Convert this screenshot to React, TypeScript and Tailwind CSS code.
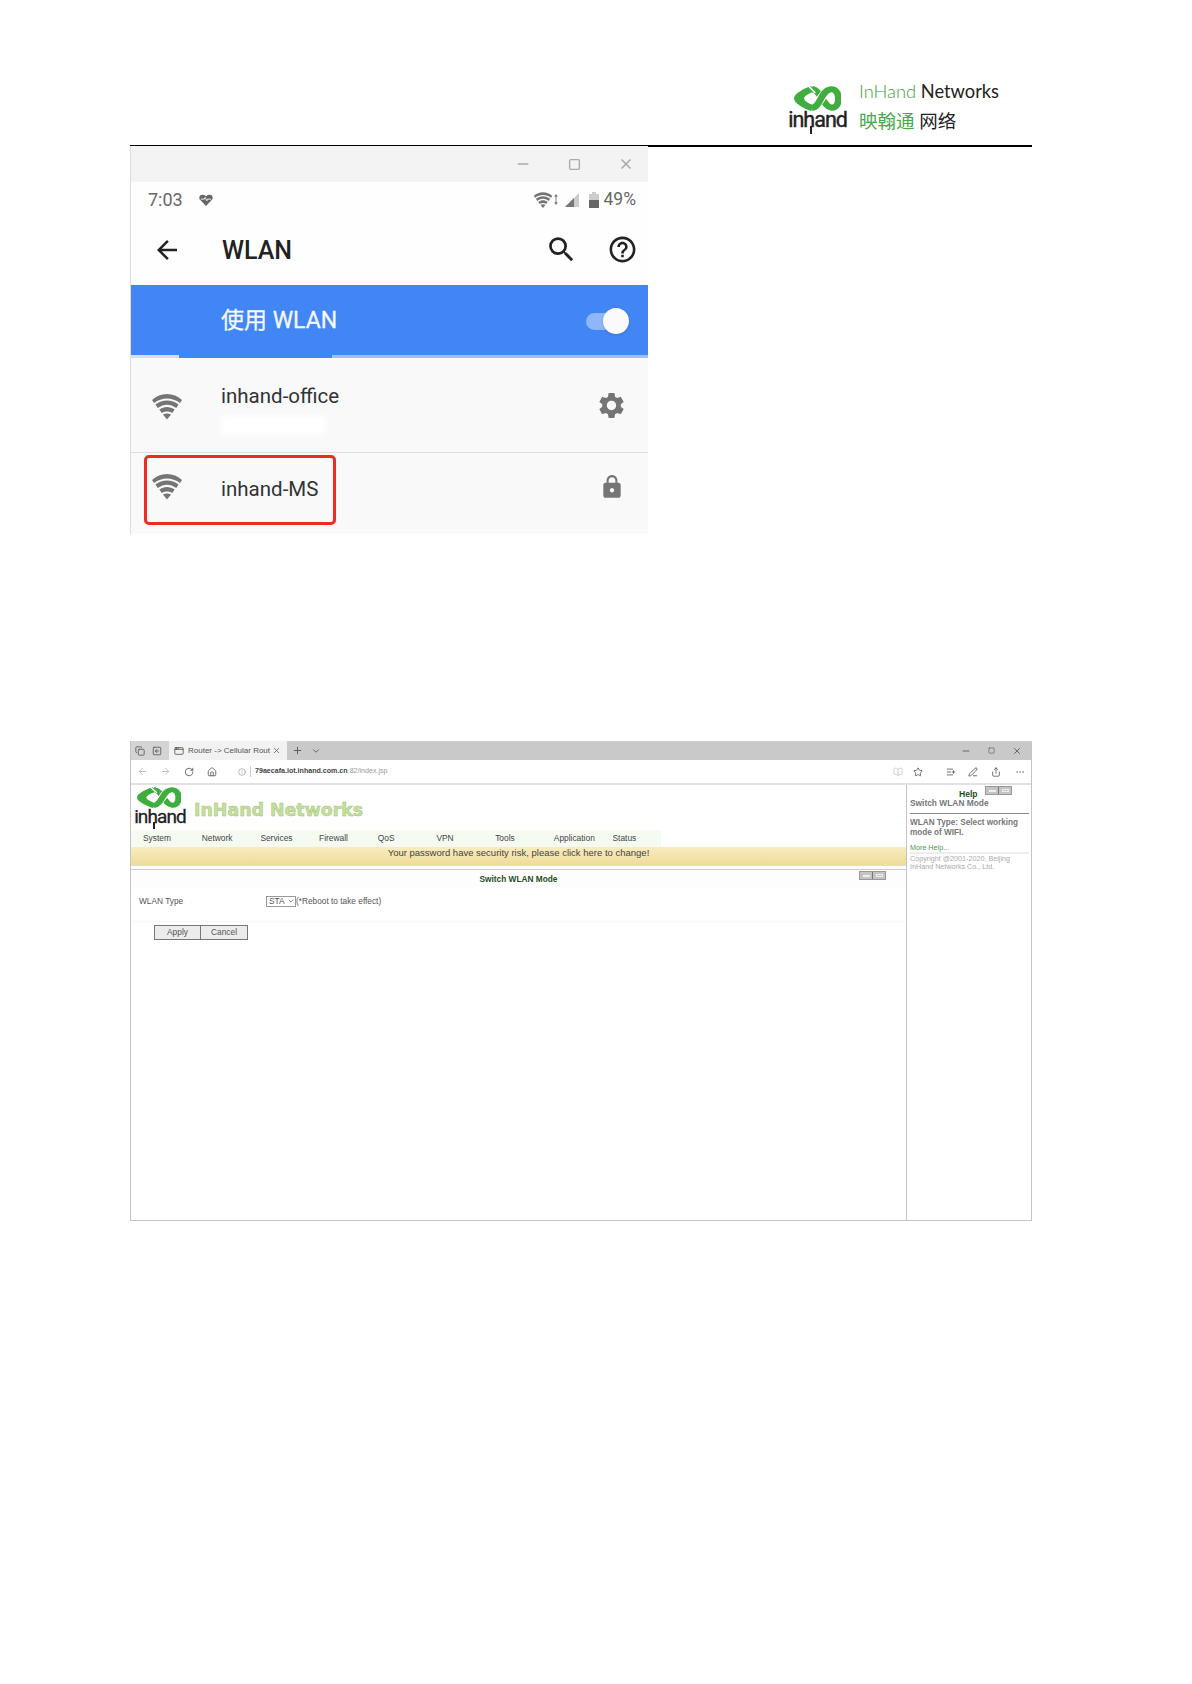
import { ArrowLeft, Minus, Square, X, Plus, ChevronDown, RotateCw, Home, Info, Star, Share, PenLine, BookOpen, ListPlus, Ellipsis, ArrowRight, Copy, SquareArrowLeft, AppWindow } from 'lucide-react';
import { MdSettings, MdLock, MdSearch, MdHelpOutline, MdArrowBack } from 'react-icons/md';

const cjk = "font-['Lato','Noto_Sans_CJK_SC',sans-serif]";
const menuItems = ['System', 'Network', 'Services', 'Firewall', 'QoS', 'VPN', 'Tools', 'Application', 'Status'];

function Knot({ className }: { className: string }) {
  return (
    <svg viewBox="0 0 42 25" preserveAspectRatio="none" className={className}>
      <path d="M15 0 C8 3 0 8 0 12.5 C0 17 8 22 15 25 L19 20 C14 18 9 15 9 12.5 C9 10 14 7 19 5 Z" fill="#3fae3f" />
      <path d="M16 3 C24 4 26 20 33 21.5 C38 22.5 40 17 39.5 12" fill="none" stroke="#3fae3f" strokeWidth="6" />
      <path d="M19 19 C24 16 25 7 32 3" fill="none" stroke="#fff" strokeWidth="8" />
      <path d="M16 22 C24 21 24 5 32 3.5 C37 2.5 40 7 39.5 13" fill="none" stroke="#3fae3f" strokeWidth="6" />
      <path d="M13 0 L19 7" fill="none" stroke="#fff" strokeWidth="1.5" />
      <path d="M20 12.5 L16 10.5 L16 14.5 Z" fill="#fff" />
    </svg>
  );
}

function WifiIcon({ className }: { className: string }) {
  return (
    <svg viewBox="0 0 30 26" className={className} fill="#757575">
      <path d="M0 6.5 C8 -1.5 22 -1.5 30 6.5 L28 9.5 C20 3.5 10 3.5 2 9.5 Z" />
      <path d="M3.5 11 C10 5.5 20 5.5 26.5 11 L24.3 14.5 C18 10 12 10 5.7 14.5 Z" />
      <path d="M7.3 16 C12 12.5 18 12.5 22.7 16 L20.3 19.5 C17 17.5 13 17.5 9.7 19.5 Z" />
      <path d="M11 21 C13.5 19.5 16.5 19.5 19 21 L15 26 Z" />
    </svg>
  );
}

function SmallBtns({ className }: { className: string }) {
  return (
    <div className={`flex h-[9px] w-[27px] border border-[#999] bg-[#c4c4c4] ${className}`}>
      <div className="flex flex-1 items-center justify-center border-r border-[#777]"><div className="h-[2px] w-[7px] bg-[#eee]" /></div>
      <div className="flex flex-1 items-center justify-center"><div className="h-[3px] w-[7px] border border-[#eee]" /></div>
    </div>
  );
}

function Wordmark({ className, barClass }: { className: string; barClass: string }) {
  return (
    <span className={`relative font-['Roboto',sans-serif] text-[#222] ${className}`}>
      inhand
      <span className={`absolute w-[2px] bg-[#222] ${barClass}`} />
    </span>
  );
}

export default function App() {
  return (
    <div className="h-[1684px] w-[1192px] overflow-hidden bg-white pl-[130px] font-['Liberation_Sans',sans-serif]">
      {/* page header */}
      <div className="flex h-[147px] w-[902px] items-end justify-end border-b-2 border-black pb-[12px] pr-[33px]">
        <div className="mr-[13px] flex w-[57px] flex-col items-center">
          <Knot className="h-[25px] w-[47px]" />
          <Wordmark className="-mt-[4px] text-[21.5px] leading-[26px] tracking-[-1px] [-webkit-text-stroke:0.4px_#222]" barClass="left-[37%] top-[19px] h-[8px]" />
        </div>
        <div className={`flex flex-col ${cjk}`}>
          <span className="whitespace-nowrap text-[18.3px] leading-[24px] text-[#231f20]"><span className="font-light text-[#3f9f3f]">InHand</span> Networks</span>
          <span className="mt-[6px] whitespace-nowrap text-[18.5px] leading-[24px] text-[#222]"><span className="text-[#4aa84a]">映翰通</span> 网络</span>
        </div>
      </div>

      {/* phone screenshot */}
      <div className="-mt-px flex h-[388px] w-[518px] flex-col border-l border-[#ddd] font-['Roboto',sans-serif]">
        <div className="flex h-[36px] flex-none items-center justify-end gap-[37px] bg-[#f3f3f3] pr-[14px] text-[#aaa]">
          <Minus size={16} strokeWidth={2.5} />
          <Square size={13} strokeWidth={2.5} />
          <X size={16} strokeWidth={2.5} />
        </div>
        <div className="flex h-[32px] flex-none items-center bg-[#fefefe] pl-[17px] pr-[12px] pt-[3px] text-[#666]">
          <span className="text-[18px]">7:03</span>
          <svg viewBox="0 0 16 14" className="ml-[16px] h-[12px] w-[14px]">
            <path d="M8 14 L0.5 6 C-1 2 3 -1 8 2.5 C13 -1 17 2 15.5 6 Z" fill="#666" />
            <path d="M2 6 H6 L7 4 L9 8 L10 6 H14" stroke="#fff" strokeWidth="1" fill="none" />
          </svg>
          <div className="ml-auto flex items-center gap-[5px]">
            <WifiIcon className="h-[16px] w-[20px]" />
            <svg viewBox="0 0 4 12" className="-ml-[4px] h-[11px] w-[4px]"><path d="M2 0 L4 3 H0 Z M2 12 L4 9 H0 Z M1.5 3 H2.5 V9 H1.5 Z" fill="#777" /></svg>
            <svg viewBox="0 0 16 16" className="ml-[1px] h-[16px] w-[16px]"><path d="M15 1 V15 H1 Z" fill="#ccc" /><path d="M10 6 V15 H1 Z" fill="#777" /></svg>
            <svg viewBox="0 0 10 16" className="ml-[4px] h-[16px] w-[10px]"><path d="M3 0 H7 V2 H10 V16 H0 V2 H3 Z" fill="#ccc" /><path d="M0 8 H10 V16 H0 Z" fill="#666" /></svg>
            <span className="text-[17.5px]">49%</span>
          </div>
        </div>
        <div className="flex h-[71px] flex-none items-center bg-[#fefefe] pl-[21px] pr-[10px] pt-[3px]">
          <MdArrowBack size={30} className="-mt-[3px] text-[#222]" />
          <span className="ml-[40px] text-[25px] font-medium text-[#222]">WLAN</span>
          <MdSearch size={33} className="-mt-[3px] ml-auto text-[#222]" />
          <MdHelpOutline size={31} className="-mt-[3px] ml-[29px] text-[#222]" />
        </div>
        <div className="flex h-[73px] flex-none flex-col bg-[#4285f4]">
          <div className="flex flex-1 items-center pl-[90px] pr-[20px] pt-[2px]">
            <span className="font-['Roboto','Noto_Sans_CJK_SC',sans-serif] text-[23px] text-[#f4f8ff] [-webkit-text-stroke:0.3px_#f4f8ff]">使用 WLAN</span>
            <div className="ml-auto flex h-[17px] w-[42px] items-center justify-end rounded-full bg-[#8fb6f8]">
              <div className="-mr-[1px] h-[26px] w-[26px] rounded-full bg-[#fafafa] shadow" />
            </div>
          </div>
          <div className="flex h-[3px] flex-none">
            <div className="w-[48px] bg-[#d0e0fb]" />
            <div className="w-[153px]" />
            <div className="flex-1 bg-[#9dbff8]" />
          </div>
        </div>
        <div className="relative flex h-[95px] flex-none items-center border-b border-[#ddd] bg-[#f9f9f9] pl-[21px] pr-[21px]">
          <div className="absolute left-[90px] top-[58px] h-[18px] w-[105px] bg-white blur-[3px]" />
          <WifiIcon className="mt-[2px] h-[27px] w-[30px]" />
          <div className="relative -mt-[18px] ml-[39px] text-[20.5px] text-[#333]">inhand-office</div>
          <MdSettings size={31} className="ml-auto text-[#757575]" />
        </div>
        <div className="flex flex-1 items-center bg-[#f9f9f9] pb-[9px] pl-[21px] pr-[21px]">
          <div className="relative -mt-[6px]">
            <WifiIcon className="h-[27px] w-[30px]" />
            <div className="absolute -left-[8px] -top-[18px] h-[70px] w-[192px] rounded-[5px] border-[3px] border-[#ee2a24]" />
          </div>
          <div className="ml-[39px] text-[20.5px] text-[#333]">inhand-MS</div>
          <MdLock size={26} className="mb-[4px] ml-auto mr-[2px] text-[#757575]" />
        </div>
      </div>

      {/* browser screenshot */}
      <div className="mt-[207px] flex h-[480px] w-[902px] flex-col border-b border-l border-r border-[#c4c4c4]">
        <div className="flex h-[19px] flex-none items-center bg-[#c9c9c9] text-[#555]">
          <div className="flex h-full w-[38px] items-center gap-[7px] bg-[#d4d4d4] pl-[4px]">
            <Copy size={10} />
            <SquareArrowLeft size={10} />
          </div>
          <div className="flex h-full w-[118px] items-center bg-[#f2f2f2] pl-[5px]">
            <AppWindow size={10} />
            <span className="ml-[4px] w-[80px] whitespace-nowrap text-[8px]">Router -&gt; Cellular Rout</span>
            <X size={9} className="ml-[4px]" />
          </div>
          <Plus size={11} className="ml-[5px]" />
          <ChevronDown size={10} className="ml-[8px]" />
          <div className="ml-auto flex items-center gap-[17px] pr-[9px]">
            <Minus size={10} />
            <Square size={7} />
            <X size={10} />
          </div>
        </div>
        <div className="flex h-[25px] flex-none items-center border-b-2 border-[#e2e2e2] bg-white text-[#555]">
          <ArrowLeft size={11} className="ml-[6px] text-[#bbb]" />
          <ArrowRight size={11} className="ml-[12px] text-[#bbb]" />
          <RotateCw size={10} className="ml-[13px]" />
          <Home size={10} className="ml-[13px]" />
          <div className="ml-[15px] flex h-[20px] w-[691px] items-center">
            <Info size={8} className="ml-[6px] text-[#999]" />
            <span className="ml-[4px] border-l border-[#ccc] pl-[4px] text-[7.1px] font-bold text-[#444]">79aecafa.iot.inhand.com.cn<span className="font-normal text-[#999]">:82/index.jsp</span></span>
            <BookOpen size={10} className="ml-auto mr-[10px] text-[#ccc]" />
            <Star size={10} />
          </div>
          <ListPlus size={10} className="ml-[23px]" />
          <PenLine size={10} className="ml-[12px]" />
          <Share size={10} className="ml-[13px]" />
          <Ellipsis size={10} className="ml-[14px] text-[#888]" />
        </div>
        <div className="flex flex-1">
          <div className="flex w-[775px] flex-none flex-col">
            <div className="flex h-[45px] flex-none items-center pl-[3px]">
              <div className="flex w-[52px] flex-col items-center">
                <Knot className="-mt-[1px] ml-[-3px] h-[21px] w-[44px]" />
                <Wordmark className="-mt-[3px] text-[19px] leading-[23px] tracking-[-0.9px] [-webkit-text-stroke:0.3px_#222]" barClass="left-[37%] top-[17px] h-[7px]" />
              </div>
              <span className="ml-[8px] mt-[6px] font-['DejaVu_Sans',sans-serif] text-[17.4px] font-bold text-[#c5dfa0] [-webkit-text-stroke:0.5px_#a4c274]">InHand Networks</span>
            </div>
            <div className="flex h-[17px] w-[530px] flex-none items-center bg-[#f6fbf2] pl-[12px] text-[8.4px] text-[#444]">
              {menuItems.map(item => (
                <span key={item} className="w-[58.7px] flex-none">{item}</span>
              ))}
            </div>
            <div className="flex h-[19px] flex-none items-center justify-center border-b border-[#ddd] bg-gradient-to-b from-[#f8ecc0] to-[#f0dc98] pb-[5px] text-[9.5px] text-[#444]">
              Your password have security risk, please click here to change!
            </div>
            <div className="mt-[3px] flex flex-1 flex-col border-t border-[#ccc]">
              <div className="relative flex h-[18px] flex-none items-center justify-center bg-[#fdfdfd] text-[8.3px] font-bold text-[#1e4d22]">
                Switch WLAN Mode
                <SmallBtns className="absolute right-[20px] top-[1px]" />
              </div>
              <div className="flex h-[34px] flex-none items-center border-b border-dotted border-[#eee] pb-[7px] pl-[8px] text-[8.3px] text-[#555]">
                <span className="w-[127px]">WLAN Type</span>
                <div className="flex h-[11px] w-[30px] items-center border border-[#999] pl-[2px] text-[#555]">STA<ChevronDown size={8} className="ml-auto" /></div>
                <span>(*Reboot to take effect)</span>
              </div>
              <div className="mt-[3px] flex pl-[23px] text-[8.4px] text-[#555]">
                <div className="flex h-[15px] w-[47px] items-center justify-center border border-[#777] bg-[#ececec]">Apply</div>
                <div className="flex h-[15px] w-[47px] items-center justify-center border border-l-0 border-[#777] bg-[#ececec]">Cancel</div>
              </div>
            </div>
          </div>
          <div className="flex-1 border-l border-[#c4c4c4] pl-[3px] pr-[2px] pt-[3px] text-[#777]">
            <div className="relative h-[12px] pl-[49px] text-[8.6px] font-bold leading-[12px] text-[#1e4d22]">
              Help
              <SmallBtns className="absolute -top-[2px] left-[75px]" />
            </div>
            <div className="-mt-[2px] text-[8.4px] font-bold leading-[10px]">Switch WLAN Mode</div>
            <div className="mt-[5px] border-t border-[#888] pt-[4px] text-[8.2px] font-bold leading-[10px]">WLAN Type: Select working<br />mode of WIFI.</div>
            <div className="mt-[5px] border-b-2 border-[#eee] text-[7.2px] leading-[9px] text-[#4a9a4a]">More Help...</div>
            <div className="mt-[1px] text-[7.2px] leading-[8px] text-[#aaa]">Copyright @2001-2020, Beijing<br />InHand Networks Co., Ltd.</div>
          </div>
        </div>
      </div>
    </div>
  );
}
